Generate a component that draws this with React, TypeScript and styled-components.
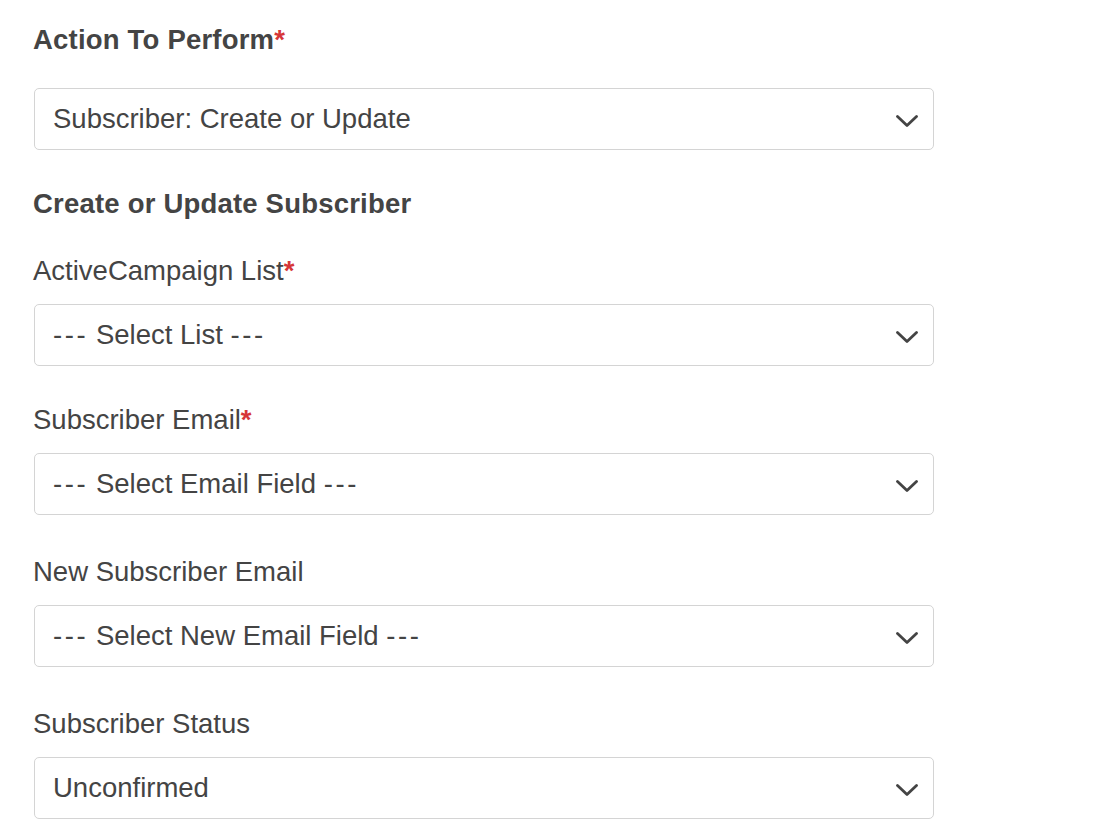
import styled, { createGlobalStyle } from "styled-components";

const GlobalStyle = createGlobalStyle`
    body {
        margin: 0;
        background: #ffffff;
        font-family: "Liberation Sans", Arial, Helvetica, sans-serif;
        color: #444444;
    }
`;

interface FieldProps {
    label: string;
    value: string;
    required?: boolean;
    gap: number;
}

// "---" 구분자는 원본 폰트에서 조금 더 넓게 보이므로 따로 감싼다
const renderValue = (value: string) => {
    const parts = value.split(/(---)/);
    return parts.map((part, i) => (part === "---" ? <Dashes key={i}>---</Dashes> : part));
};

// 드롭다운 필드 하나 (라벨 + 셀렉트 박스)
const Field = ({ label, value, required, gap }: FieldProps) => {
    return (
        <FieldWrap $gap={gap}>
            <Label>
                {label}
                {required && <Star>*</Star>}
            </Label>
            <Select>
                <SelectText>{renderValue(value)}</SelectText>
                <Chevron viewBox="0 0 22 12" aria-hidden>
                    <path d="M1.5 1.5 L11 10.5 L20.5 1.5" />
                </Chevron>
            </Select>
        </FieldWrap>
    );
};

const App = () => {
    return (
        <>
            <GlobalStyle />
            <Container>
                <Title>
                    Action To Perform<Star>*</Star>
                </Title>
                <Select $top={32}>
                    <SelectText>Subscriber: Create or Update</SelectText>
                    <Chevron viewBox="0 0 22 12" aria-hidden>
                        <path d="M1.5 1.5 L11 10.5 L20.5 1.5" />
                    </Chevron>
                </Select>
                <SubTitle>Create or Update Subscriber</SubTitle>
                <Field label="ActiveCampaign List" value="--- Select List ---" required gap={35} />
                <Field label="Subscriber Email" value="--- Select Email Field ---" required gap={38} />
                <Field label="New Subscriber Email" value="--- Select New Email Field ---" gap={41} />
                <Field label="Subscriber Status" value="Unconfirmed" gap={41} />
            </Container>
        </>
    );
};

export default App;

// Styled Components
const Container = styled.div`
    width: 900px;
    padding: 24px 0 20px 33px;
    display: flex;
    flex-direction: column;
`;

const Title = styled.h3`
    margin: 0;
    font-size: 27.5px;
    line-height: 32px;
    font-weight: bold;
    letter-spacing: 0.2px;
    color: #444444;
`;

const SubTitle = styled.h4`
    margin: 38px 0 0;
    font-size: 27.5px;
    line-height: 32px;
    font-weight: bold;
    letter-spacing: 0.2px;
    color: #444444;
`;

const Star = styled.span`
    color: #d63638;
    font-weight: bold;
`;

const FieldWrap = styled.div<{ $gap: number }>`
    display: flex;
    flex-direction: column;
    gap: 17px;
    margin-top: ${({ $gap }) => $gap}px;
`;

const Label = styled.label`
    font-size: 27.5px;
    line-height: 32px;
    color: #444444;
`;

const Select = styled.div<{ $top?: number }>`
    box-sizing: border-box;
    margin-top: ${({ $top }) => $top ?? 0}px;
    margin-left: 1px;
    width: 900px;
    height: 62px;
    border: 1.5px solid #d4d4d4;
    border-radius: 5px;
    background: #ffffff;
    display: flex;
    align-items: center;
    justify-content: space-between;
    padding: 0 15px 0 18px;
`;

const SelectText = styled.span`
    font-size: 27.5px;
    color: #444444;
    white-space: nowrap;
`;

const Dashes = styled.span`
    letter-spacing: 2.6px;
`;

const Chevron = styled.svg`
    width: 22px;
    height: 12px;
    margin-top: 3px;
    fill: none;
    stroke: #444444;
    stroke-width: 2.8;
    stroke-linecap: round;
    stroke-linejoin: round;
`;
